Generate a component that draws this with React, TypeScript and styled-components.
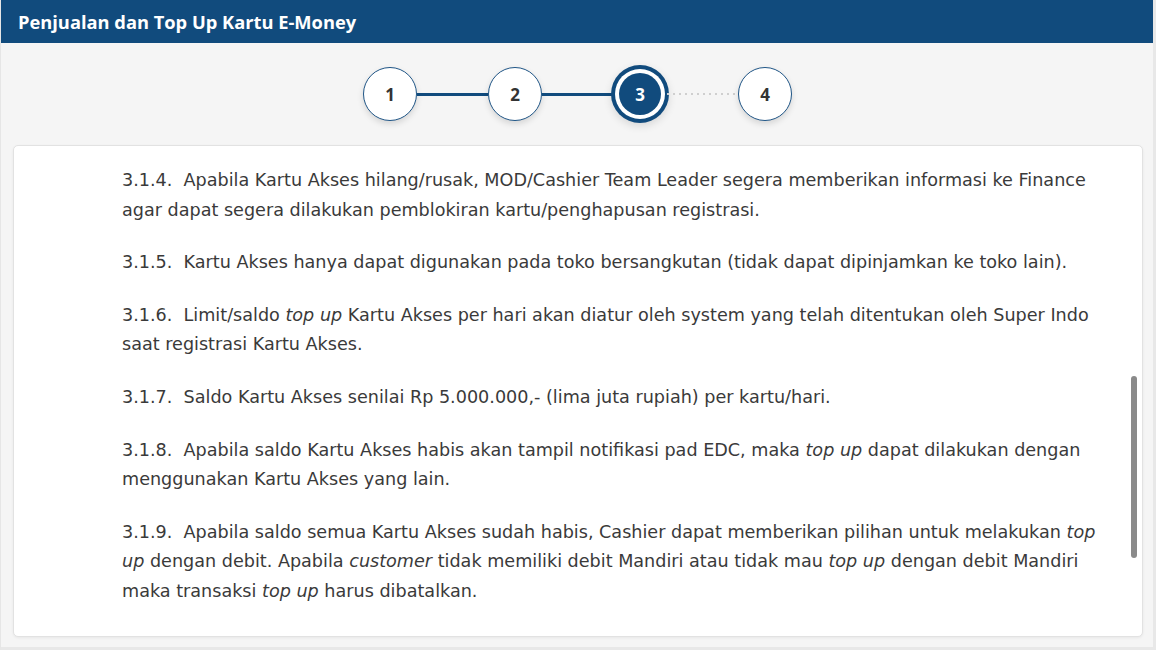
import React from "react";
import styled, { createGlobalStyle, css } from "styled-components";

const Global = createGlobalStyle`
  html, body { margin: 0; padding: 0; }
  body { background: #f5f5f5; }
  * { box-sizing: border-box; }
`;

const Frame = styled.div`
  width: 1156px;
  height: 650px;
  background: #f5f5f5;
  border-left: 1px solid #e6e6e6;
  border-right: 3px solid #e8e8e8;
  border-bottom: 3px solid #e8e8e8;
  display: flex;
  flex-direction: column;
  overflow: hidden;
`;

const Header = styled.header`
  height: 43px;
  flex: none;
  background: #114b7d;
  display: flex;
  align-items: center;
  padding-left: 17px;
  color: #fff;
  font-family: "Open Sans", "Noto Sans", sans-serif;
  font-weight: 700;
  font-size: 18.3px;
`;

const Stepper = styled.nav`
  flex: none;
  display: flex;
  justify-content: center;
  align-items: center;
  padding: 24px 0 24px 1px;
`;

const Step = styled.div`
  width: 54px;
  height: 54px;
  display: flex;
  align-items: center;
  justify-content: center;
`;

const Circle = styled.div<{ $active?: boolean }>`
  flex: none;
  border-radius: 50%;
  display: flex;
  align-items: center;
  justify-content: center;
  font-family: "Open Sans", "Noto Sans", sans-serif;
  font-weight: 700;
  font-size: 17px;
  ${(p) =>
    p.$active
      ? css`
          width: 42px;
          height: 42px;
          background: #114b7d;
          color: #fff;
          box-shadow: 0 0 0 4px #fff, 0 0 0 8px #114b7d, 0 3px 8px 8px rgba(0, 0, 0, 0.12);
        `
      : css`
          width: 54px;
          height: 54px;
          background: #fff;
          color: #333;
          border: 1.5px solid #1f5586;
          box-shadow: 0 3px 6px rgba(0, 0, 0, 0.13);
        `}
`;

const Connector = styled.div<{ $done?: boolean }>`
  width: 71px;
  height: 3px;
  ${(p) =>
    p.$done
      ? css`
          background: #114b7d;
        `
      : css`
          height: 2px;
          background: repeating-linear-gradient(90deg, #cfcfcf 0 2px, transparent 2px 6px);
        `}
`;

const Card = styled.section`
  position: relative;
  flex: none;
  height: 492px;
  margin: 0 10px 0 12px;
  background: #fff;
  border: 1px solid #e2e2e2;
  border-radius: 5px;
  box-shadow: 0 1px 3px rgba(0, 0, 0, 0.06);
  overflow: hidden;
`;

const Body = styled.div`
  padding: 20px 0 0 108px;
  width: 1106px;
  font-family: "DejaVu Sans", "Noto Sans", sans-serif;
  font-size: 17.6px;
  line-height: 29.6px;
  color: #3a3a3a;
`;

const Item = styled.p`
  margin: 0 0 23px;
  i { font-style: italic; }
`;

const Thumb = styled.div`
  position: absolute;
  right: 5px;
  top: 230px;
  width: 6px;
  height: 182px;
  border-radius: 3px;
  background: #8a8a8a;
`;

const steps = [1, 2, 3, 4];
const current = 3;

export default function App() {
  return (
    <>
      <Global />
      <Frame>
        <Header>Penjualan dan Top Up Kartu E-Money</Header>
        <Stepper>
          {steps.map((s, i) => (
            <React.Fragment key={s}>
              {i > 0 && <Connector $done={s <= current} />}
              <Step>
                <Circle $active={s === current}>{s}</Circle>
              </Step>
            </React.Fragment>
          ))}
        </Stepper>
        <Card>
          <Body>
            <Item>
              3.1.4.&nbsp; Apabila Kartu Akses hilang/rusak, MOD/Cashier Team Leader segera memberikan informasi ke
              Finance agar dapat segera dilakukan pemblokiran kartu/penghapusan registrasi.
            </Item>
            <Item>
              3.1.5.&nbsp; Kartu Akses hanya dapat digunakan pada toko bersangkutan (tidak dapat dipinjamkan ke toko
              lain).
            </Item>
            <Item>
              3.1.6.&nbsp; Limit/saldo <i>top up</i> Kartu Akses per hari akan diatur oleh system yang telah
              ditentukan oleh Super Indo saat registrasi Kartu Akses.
            </Item>
            <Item>3.1.7.&nbsp; Saldo Kartu Akses senilai Rp 5.000.000,- (lima juta rupiah) per kartu/hari.</Item>
            <Item>
              3.1.8.&nbsp; Apabila saldo Kartu Akses habis akan tampil notifikasi pad EDC, maka <i>top up</i> dapat
              dilakukan dengan menggunakan Kartu Akses yang lain.
            </Item>
            <Item>
              3.1.9.&nbsp; Apabila saldo semua Kartu Akses sudah habis, Cashier dapat memberikan pilihan untuk
              melakukan <i>top up</i> dengan debit. Apabila <i>customer</i> tidak memiliki debit Mandiri atau tidak
              mau <i>top up</i> dengan debit Mandiri maka transaksi <i>top up</i> harus dibatalkan.
            </Item>
          </Body>
          <Thumb />
        </Card>
      </Frame>
    </>
  );
}
